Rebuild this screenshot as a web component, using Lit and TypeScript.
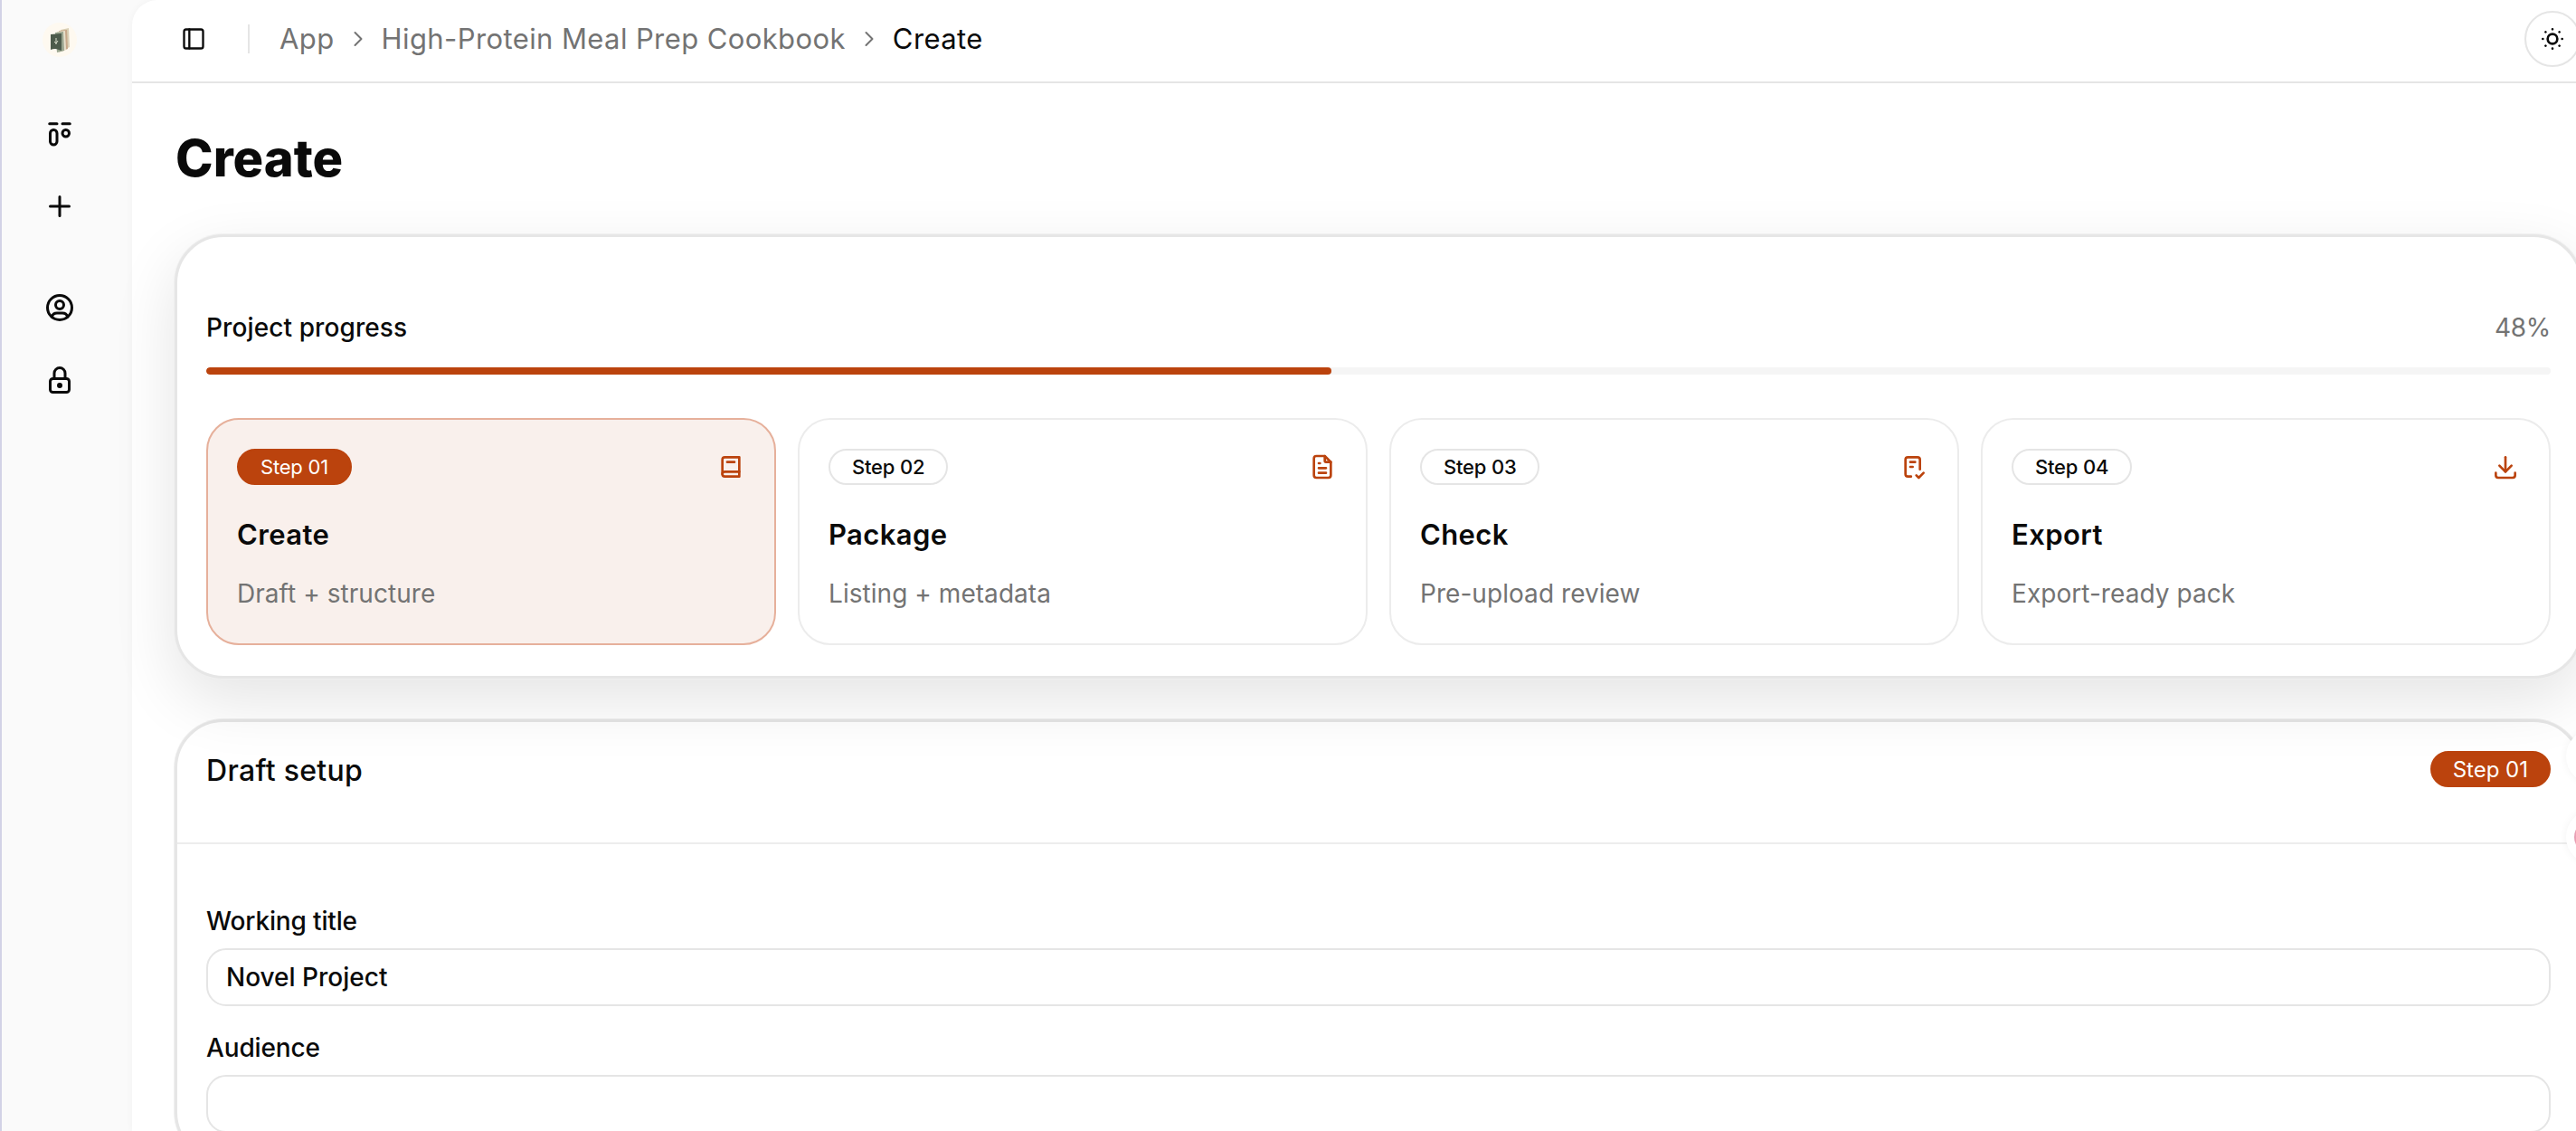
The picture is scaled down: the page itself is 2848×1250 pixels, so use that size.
import { LitElement, html, css, svg } from "lit";
import { customElement } from "lit/decorators.js";

const ic = (size: number, body: unknown, sw = 2) => html`<svg class="ic" width=${size} height=${size} viewBox="0 0 24 24" fill="none" stroke="currentColor" stroke-width=${sw} stroke-linecap="round" stroke-linejoin="round">${body}</svg>`;

const icons = {
  board: svg`<path d="M4.5 4.5h5.5M14 4.5h5.5"/><rect x="5" y="9" width="5" height="11" rx="2.5"/><circle cx="16.5" cy="11.5" r="2.5"/>`,
  plus: svg`<path d="M12 5v14M5 12h14"/>`,
  user: svg`<circle cx="12" cy="12" r="9"/><circle cx="12" cy="10" r="3"/><path d="M6.168 18.849a4 4 0 0 1 3.832 -2.849h4a4 4 0 0 1 3.834 2.855"/>`,
  lock: svg`<path d="M5 13a2 2 0 0 1 2 -2h10a2 2 0 0 1 2 2v6a2 2 0 0 1 -2 2h-10a2 2 0 0 1 -2 -2v-6z"/><path d="M11 16a1 1 0 1 0 2 0a1 1 0 0 0 -2 0"/><path d="M8 11v-4a4 4 0 1 1 8 0v4"/>`,
  panel: svg`<rect x="3" y="3" width="18" height="18" rx="2"/><path d="M8 3v18"/>`,
  chevron: svg`<path d="M9 6l6 6l-6 6"/>`,
  sun: svg`<circle cx="12" cy="12" r="4"/><path d="M4 12h.01M12 4v.01M20 12h.01M12 20v.01M6.31 6.31l-.01 -.01M17.71 6.31l-.01 -.01M17.7 17.7l.01 .01M6.3 17.7l.01 .01"/>`,
  book: svg`<path d="M19 4v16h-12a2 2 0 0 1 -2 -2v-12a2 2 0 0 1 2 -2h12z"/><path d="M19 16h-12a2 2 0 0 0 -2 2"/><path d="M9 8h6"/>`,
  file: svg`<path d="M14 3v4a1 1 0 0 0 1 1h4"/><path d="M17 21h-10a2 2 0 0 1 -2 -2v-14a2 2 0 0 1 2 -2h7l5 5v11a2 2 0 0 1 -2 2z"/><path d="M9 9h1M9 13h6M9 17h6"/>`,
  check: svg`<path d="M9.615 20h-2.615a2 2 0 0 1 -2 -2v-12a2 2 0 0 1 2 -2h8a2 2 0 0 1 2 2v8"/><path d="M14 19l2 2l4 -4"/><path d="M9 8h4M9 12h2"/>`,
  download: svg`<path d="M4 17v2a2 2 0 0 0 2 2h12a2 2 0 0 0 2 -2v-2"/><path d="M7 11l5 5l5 -5"/><path d="M12 4v12"/>`,
};

const steps = [
  { n: "01", title: "Create", sub: "Draft + structure", icon: icons.book, active: true },
  { n: "02", title: "Package", sub: "Listing + metadata", icon: icons.file, active: false },
  { n: "03", title: "Check", sub: "Pre-upload review", icon: icons.check, active: false },
  { n: "04", title: "Export", sub: "Export-ready pack", icon: icons.download, active: false },
];

const progress = 48;

@customElement("app-root")
export class AppRoot extends LitElement {
  static styles = css`
    :host {
      display: flex;
      width: 2848px;
      height: 1250px;
      overflow: hidden;
      position: relative;
      background: #fafafa;
      color: #0a0a0a;
      font-family: Inter, "Liberation Sans", sans-serif;
    }
    * { box-sizing: border-box; }
    .ic { display: block; flex: none; }
    .side {
      flex: none;
      width: 146px;
      border-left: 2px solid #d2d2e6;
      display: flex;
      flex-direction: column;
      align-items: center;
      padding: 25px 16px 0 0;
    }
    .logo {
      width: 38px;
      height: 38px;
      margin-bottom: 63px;
    }
    .nav {
      display: flex;
      flex-direction: column;
      align-items: center;
      gap: 36px;
      margin-bottom: 68px;
    }
    .nav-item {
      width: 44px;
      height: 44px;
      display: flex;
      align-items: center;
      justify-content: center;
    }
    .main {
      flex: none;
      width: 2756px;
      background: #fff;
      border-top-left-radius: 28px;
      box-shadow: 0 0 8px rgba(0, 0, 0, 0.04);
    }
    .top {
      height: 92px;
      border-bottom: 2px solid #e5e5e5;
      display: flex;
      align-items: center;
      padding: 0 49px 4px 54px;
    }
    .sep {
      width: 2px;
      height: 32px;
      background: #e5e5e5;
      margin: 0 33px 0 46px;
    }
    .crumbs {
      flex: 1;
      display: flex;
      align-items: center;
      gap: 12px;
      font-size: 31px;
      letter-spacing: 0.4px;
      color: #737373;
    }
    .crumbs span { padding-bottom: 2px; }
    .crumbs .now { color: #0a0a0a; }
    .theme {
      width: 62px;
      height: 62px;
      border-radius: 50%;
      border: 2px solid #e5e5e5;
      display: flex;
      align-items: center;
      justify-content: center;
    }
    .content { padding: 49px 47px 0; }
    h1 {
      margin: 0 0 50px;
      padding-left: 1px;
      font-size: 56px;
      line-height: 68px;
      font-weight: 800;
      letter-spacing: 0;
    }
    .card {
      background: #fff;
      border: 3px solid #e6e6e6;
      border-radius: 54px;
      box-shadow: 0 0 0 1px #f0f0f0;
    }
    .progress {
      position: relative;
      z-index: 1;
      padding: 78px 32px 34px;
      box-shadow: 0 0 0 1px #f0f0f0, 0 24px 70px rgba(0, 0, 0, 0.11);
      margin-bottom: 45px;
    }
    .prog-head {
      display: flex;
      justify-content: space-between;
      align-items: center;
      height: 44px;
      font-size: 28px;
      font-weight: 500;
      letter-spacing: 0.1px;
    }
    .pct { color: #737373; font-weight: 400; letter-spacing: -0.3px; }
    .track {
      margin-top: 22px;
      height: 8px;
      border-radius: 4px;
      background: #f5f5f5;
      overflow: hidden;
    }
    .fill { height: 100%; border-radius: 4px; background: #bb430d; }
    .steps {
      margin-top: 48px;
      display: grid;
      grid-template-columns: repeat(4, 1fr);
      gap: 24px;
    }
    .step {
      height: 251px;
      border: 2px solid #ececec;
      border-radius: 36px;
      padding: 32px;
    }
    .step.on { background: #f9f0ec; border-color: #e6b09b; }
    .step-top {
      display: flex;
      justify-content: space-between;
      align-items: center;
      height: 40px;
    }
    .step-top .ic { color: #bb430d; }
    .badge {
      height: 40px;
      display: inline-flex;
      align-items: center;
      padding: 0 24px;
      border-radius: 20px;
      border: 2px solid #e5e5e5;
      font-size: 22px;
      font-weight: 500;
      letter-spacing: -0.2px;
    }
    .badge.on { background: #bb430d; border-color: #bb430d; color: #fff; font-weight: 400; }
    .badge.lg { font-size: 24px; letter-spacing: 0; padding: 0 23px; }
    .step-title {
      margin-top: 33px;
      font-size: 31px;
      line-height: 44px;
      font-weight: 600;
      letter-spacing: 0.4px;
    }
    .step-sub {
      margin-top: 21px;
      font-size: 28px;
      line-height: 44px;
      letter-spacing: 0.05px;
      color: #737373;
    }
    .draft-head {
      height: 135px;
      padding: 32px 32px 0;
      display: flex;
      justify-content: space-between;
      align-items: flex-start;
      border-bottom: 2px solid #ededed;
    }
    .draft-title {
      font-size: 32px;
      line-height: 44px;
      font-weight: 500;
      letter-spacing: 0.3px;
    }
    .draft-body { padding: 67px 32px 0; }
    .field { display: block; margin-bottom: 28px; }
    .label {
      display: block;
      font-size: 28px;
      line-height: 36px;
      font-weight: 500;
      letter-spacing: -0.15px;
      margin-bottom: 12px;
    }
    input {
      display: block;
      width: 100%;
      height: 64px;
      border: 2px solid #e5e5e5;
      border-radius: 22px;
      padding: 0 20px;
      font: 500 28px Inter, "Liberation Sans", sans-serif;
      letter-spacing: 0;
      color: #0a0a0a;
      background: #fff;
      outline: none;
    }
    .fab {
      position: absolute;
      z-index: 2;
      left: 2837px;
      width: 60px;
      height: 60px;
      border-radius: 50%;
      background: #fff;
      box-shadow: 0 0 10px rgba(0, 0, 0, 0.05);
    }
    .fab.a { top: 806px; }
    .fab.b { top: 895px; }
    .dot {
      position: absolute;
      left: 9px;
      top: 12px;
      width: 36px;
      height: 36px;
      border-radius: 50%;
      background: #e8a0b4;
    }
  `;

  render() {
    return html`
      <aside class="side">
        <svg class="logo" viewBox="0 0 38 38">
          <circle cx="19" cy="19" r="19" fill="#fef9f0"/>
          <polygon points="20,8 29,6 30,27 22,31" fill="#d9cfb4"/>
          <polygon points="18,9 27,8 28,29 20,32" fill="#c7a88a"/>
          <polygon points="16,10 25,9 26,30 18,33" fill="#e6dfca"/>
          <polygon points="14,11 23,10 24,31 16,33" fill="#9aa58f"/>
          <path d="M9 13 L21 12 L21 31 L15 29 Q12 28.5 9 30 Z" fill="#4d5b4b"/>
          <path d="M15 17v7M13 21l2 2 2-3" stroke="#d8dccb" stroke-width="1" fill="none"/>
        </svg>
        <div class="nav">
          <div class="nav-item">${ic(36, icons.board)}</div>
          <div class="nav-item">${ic(36, icons.plus)}</div>
        </div>
        <div class="nav">
          <div class="nav-item">${ic(36, icons.user)}</div>
          <div class="nav-item">${ic(36, icons.lock)}</div>
        </div>
      </aside>
      <main class="main">
        <header class="top">
          ${ic(28, icons.panel)}
          <div class="sep"></div>
          <nav class="crumbs">
            <span>App</span>
            ${ic(28, icons.chevron, 1.7)}
            <span>High-Protein Meal Prep Cookbook</span>
            ${ic(28, icons.chevron, 1.7)}
            <span class="now">Create</span>
          </nav>
          <div class="theme">${ic(32, icons.sun)}</div>
        </header>
        <div class="content">
          <h1>Create</h1>
          <section class="card progress">
            <div class="prog-head"><span>Project progress</span><span class="pct">${progress}%</span></div>
            <div class="track"><div class="fill" style="width:${progress}%"></div></div>
            <div class="steps">
              ${steps.map(
                (s) => html`<div class="step ${s.active ? "on" : ""}">
                  <div class="step-top">
                    <span class="badge ${s.active ? "on" : ""}">Step ${s.n}</span>
                    ${ic(32, s.icon)}
                  </div>
                  <div class="step-title">${s.title}</div>
                  <div class="step-sub">${s.sub}</div>
                </div>`
              )}
            </div>
          </section>
          <section class="card">
            <div class="draft-head">
              <span class="draft-title">Draft setup</span>
              <span class="badge on lg">Step 01</span>
            </div>
            <div class="draft-body">
              <label class="field"><span class="label">Working title</span><input readonly value="Novel Project" /></label>
              <label class="field"><span class="label">Audience</span><input readonly value="" /></label>
            </div>
          </section>
        </div>
      </main>
      <div class="fab a"></div>
      <div class="fab b"><div class="dot"></div></div>
    `;
  }
}
